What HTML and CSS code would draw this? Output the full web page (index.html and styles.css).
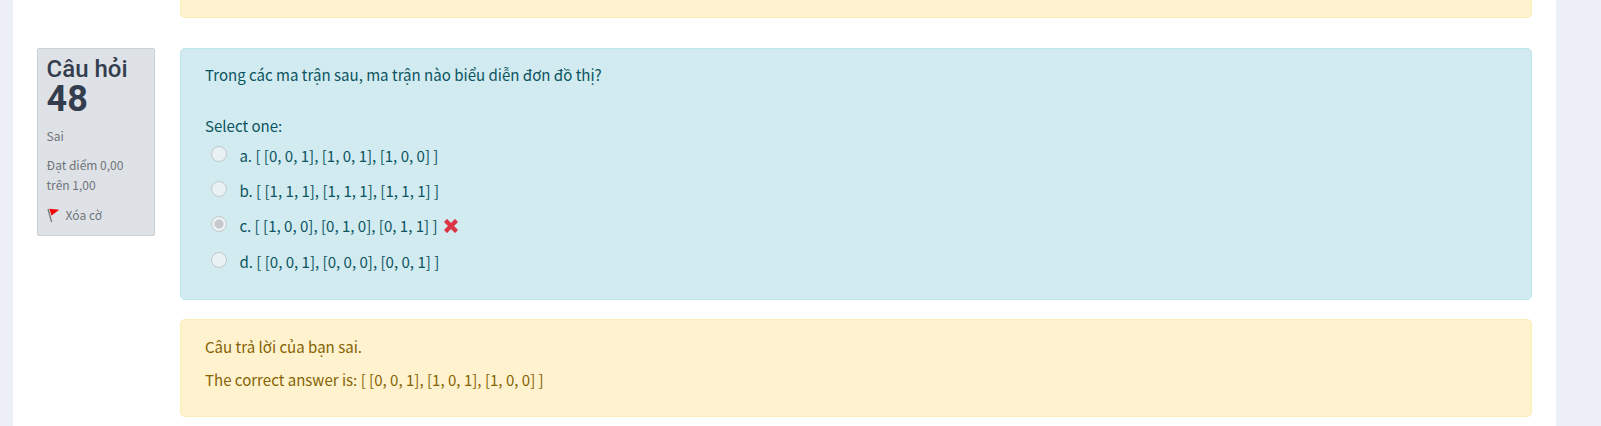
FILE: index.html
```html
<!DOCTYPE html>
<html lang="vi">
<head>
<meta charset="utf-8">
<title>Câu hỏi 48</title>
<link rel="stylesheet" href="styles.css">
</head>
<body>
<main class="page">
  <div class="previous-feedback"></div>
  <section class="question">
    <aside class="info">
      <h3 class="info-title">Câu hỏi</h3>
      <div class="info-number">48</div>
      <div class="state">Sai</div>
      <div class="grade">Đạt điểm 0,00<br>trên 1,00</div>
      <div class="flag">
        <svg class="flag-icon" width="14" height="15" viewBox="0 0 14 15"><path d="M1 1L4.6 14" stroke="#777" stroke-width="1.3" fill="none"/><path d="M2.3 .8L12.2 1.7L4.5 7.6Z" fill="#f00000"/></svg>
        <span>Xóa cờ</span>
      </div>
    </aside>
    <div class="content">
      <div class="formulation">
        <p class="qtext">Trong các ma trận sau, ma trận nào biểu diễn đơn đồ thị?</p>
        <p class="prompt">Select one:</p>
        <div class="option"><span class="radio"></span><span>a. [ [0, 0, 1], [1, 0, 1], [1, 0, 0] ]</span></div>
        <div class="option"><span class="radio"></span><span>b. [ [1, 1, 1], [1, 1, 1], [1, 1, 1] ]</span></div>
        <div class="option"><span class="radio checked"></span><span>c. [ [1, 0, 0], [0, 1, 0], [0, 1, 1] ]</span><svg class="wrong" width="14" height="14" viewBox="0 0 14 14"><path d="M3 3L11 11M11 3L3 11" stroke="#dc3545" stroke-width="4.4" stroke-linecap="square" stroke-linejoin="round"/></svg></div>
        <div class="option"><span class="radio"></span><span>d. [ [0, 0, 1], [0, 0, 0], [0, 0, 1] ]</span></div>
      </div>
      <div class="outcome">
        <p>Câu trả lời của bạn sai.</p>
        <p>The correct answer is: [ [0, 0, 1], [1, 0, 1], [1, 0, 0] ]</p>
      </div>
    </div>
  </section>
</main>
</body>
</html>
```
FILE: styles.css
```css
* { box-sizing: border-box; }
body {
  margin: 0;
  height: 426px;
  overflow: hidden;
  background: #edf0f9;
  font-family: "Noto Sans CJK SC", "Noto Sans", sans-serif;
  font-size: 15.05px;
}
p, h3 { margin: 0; }
.page {
  margin: 0 45px 0 13px;
  height: 426px;
  padding: 0 24px;
  background: #fff;
}
.previous-feedback {
  height: 18px;
  margin-left: 143px;
  background: #fff2cf;
  border: 1px solid #ffecb5;
  border-top: 0;
  border-radius: 0 0 5px 5px;
}
.question {
  display: flex;
  align-items: flex-start;
  gap: 25px;
  margin-top: 30px;
}
.info {
  width: 118px;
  height: 188px;
  padding: 6px 8.6px;
  background: #dee2e6;
  border: 1px solid #cad0d7;
  border-radius: 2px;
  color: #6f747b;
  font-size: 12px;
  line-height: 20px;
  white-space: nowrap;
}
.info-title {
  font: 500 24px/28px Roboto, sans-serif;
  color: #343d4e;
}
.info-number {
  font: 700 36px/32px Roboto, sans-serif;
  color: #343d4e;
}
.state { margin-top: 11px; }
.grade { margin-top: 9px; }
.flag { display: flex; align-items: center; gap: 5px; margin-top: 10px; }
.content { flex: 1; }
.formulation {
  height: 252px;
  padding: 12px 24px;
  background: #d1ebf0;
  border: 1px solid #bee5eb;
  border-radius: 5px;
  color: #0c5460;
}
.qtext, .prompt { line-height: 27px; }
.prompt { margin-top: 24px; }
.option { display: flex; height: 35.2px; line-height: 33px; }
.radio {
  width: 16px;
  height: 16px;
  margin: 7px 12px 0 6.4px;
  border: 1.5px solid #c3c9cb;
  border-radius: 50%;
  background: #e9f1f4;
}
.radio.checked { background: radial-gradient(circle, #c6cacc 4px, #e9f1f4 5px); }
.wrong { margin: 10px 0 0 6px; }
.outcome {
  height: 98px;
  margin-top: 19px;
  padding: 10px 24px;
  background: #fff2cf;
  border: 1px solid #ffecb5;
  border-radius: 5px;
  color: #856404;
  line-height: 33px;
}
```
